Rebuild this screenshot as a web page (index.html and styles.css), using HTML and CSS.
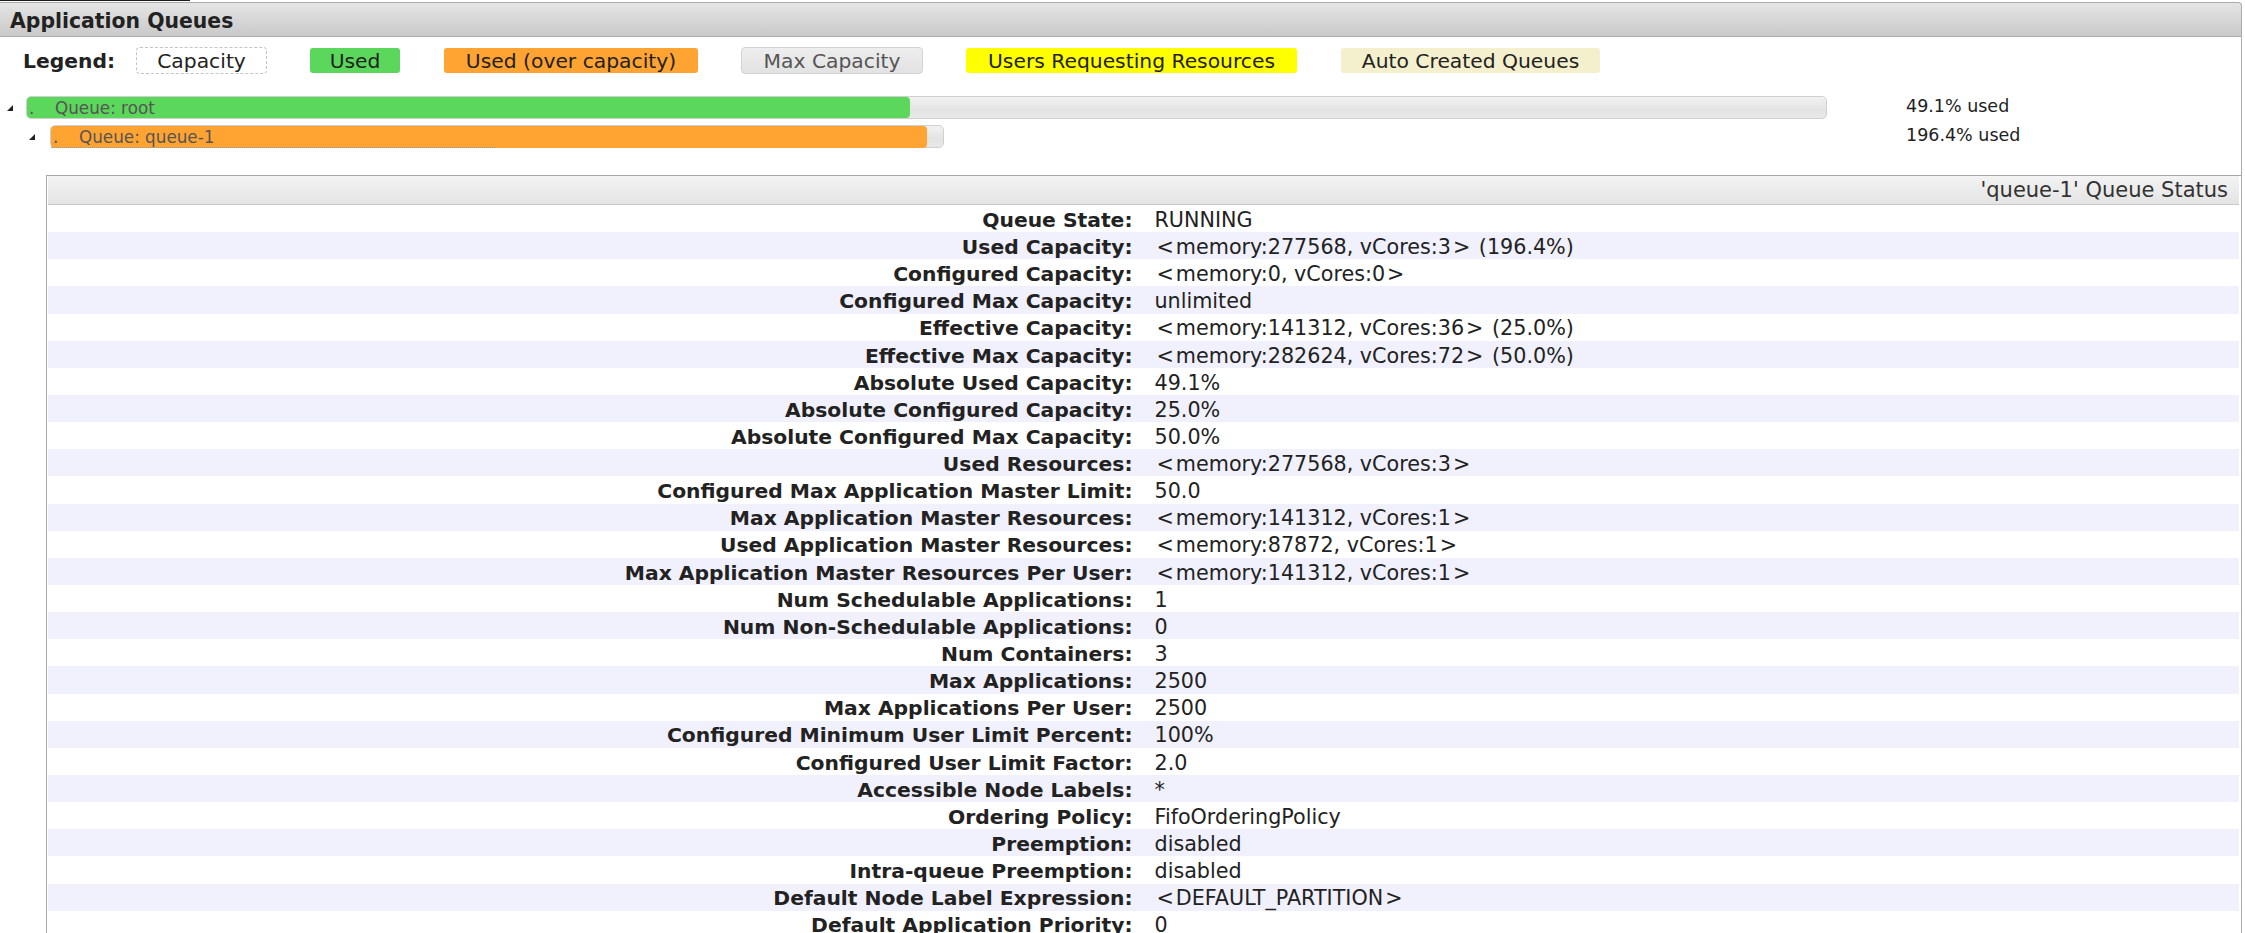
FILE: index.html
```html
<!DOCTYPE html>
<html lang="en">
<head>
<meta charset="utf-8">
<title>Application Queues</title>
<link rel="stylesheet" href="styles.css">
</head>
<body>
<div class="topline"><div class="topline-mark"></div></div>
<div class="app">
  <div class="app-header">Application Queues</div>
  <div class="app-body">
    <div class="legend">
      <span class="legend-title">Legend:</span>
      <div class="legend-items">
        <span class="lg lg-capacity">Capacity</span>
        <span class="lg lg-used">Used</span>
        <span class="lg lg-over">Used (over capacity)</span>
        <span class="lg lg-max">Max Capacity</span>
        <span class="lg lg-users">Users Requesting Resources</span>
        <span class="lg lg-auto">Auto Created Queues</span>
      </div>
    </div>

    <div class="tree">
      <div class="qrow">
        <div class="qnode level-0">
          <svg class="toggle" width="6" height="6" viewBox="0 0 6 6"><path d="M6 0 L6 6 L0 6 Z" fill="#222"/></svg>
          <div class="qbar qbar-root">
            <div class="qfill used" style="width:49.1%"></div>
            <span class="qlabel"><span class="qdot">.</span><span class="qname">Queue: root</span></span>
          </div>
        </div>
        <span class="qstats">49.1% used</span>
      </div>
      <div class="qrow">
        <div class="qnode level-1">
          <svg class="toggle" width="6" height="6" viewBox="0 0 6 6"><path d="M6 0 L6 6 L0 6 Z" fill="#222"/></svg>
          <div class="qbar qbar-child">
            <div class="qfill over" style="width:98.2%"></div>
            <span class="qlabel qlabel-focus"><span class="qdot">.</span><span class="qname">Queue: queue-1</span></span>
          </div>
        </div>
        <span class="qstats">196.4% used</span>
      </div>
    </div>

    <div class="status">
      <div class="status-head">'queue-1' Queue Status</div>
      <div class="rows">
        <div class="srow"><span class="sk">Queue State:</span><span class="sv">RUNNING</span></div>
        <div class="srow"><span class="sk">Used Capacity:</span><span class="sv"><span class="ab">&lt;</span>memory:277568, vCores:3<span class="ab">&gt;</span> (196.4%)</span></div>
        <div class="srow"><span class="sk">Configured Capacity:</span><span class="sv"><span class="ab">&lt;</span>memory:0, vCores:0<span class="ab">&gt;</span></span></div>
        <div class="srow"><span class="sk">Configured Max Capacity:</span><span class="sv">unlimited</span></div>
        <div class="srow"><span class="sk">Effective Capacity:</span><span class="sv"><span class="ab">&lt;</span>memory:141312, vCores:36<span class="ab">&gt;</span> (25.0%)</span></div>
        <div class="srow"><span class="sk">Effective Max Capacity:</span><span class="sv"><span class="ab">&lt;</span>memory:282624, vCores:72<span class="ab">&gt;</span> (50.0%)</span></div>
        <div class="srow"><span class="sk">Absolute Used Capacity:</span><span class="sv">49.1%</span></div>
        <div class="srow"><span class="sk">Absolute Configured Capacity:</span><span class="sv">25.0%</span></div>
        <div class="srow"><span class="sk">Absolute Configured Max Capacity:</span><span class="sv">50.0%</span></div>
        <div class="srow"><span class="sk">Used Resources:</span><span class="sv"><span class="ab">&lt;</span>memory:277568, vCores:3<span class="ab">&gt;</span></span></div>
        <div class="srow"><span class="sk">Configured Max Application Master Limit:</span><span class="sv">50.0</span></div>
        <div class="srow"><span class="sk">Max Application Master Resources:</span><span class="sv"><span class="ab">&lt;</span>memory:141312, vCores:1<span class="ab">&gt;</span></span></div>
        <div class="srow"><span class="sk">Used Application Master Resources:</span><span class="sv"><span class="ab">&lt;</span>memory:87872, vCores:1<span class="ab">&gt;</span></span></div>
        <div class="srow"><span class="sk">Max Application Master Resources Per User:</span><span class="sv"><span class="ab">&lt;</span>memory:141312, vCores:1<span class="ab">&gt;</span></span></div>
        <div class="srow"><span class="sk">Num Schedulable Applications:</span><span class="sv">1</span></div>
        <div class="srow"><span class="sk">Num Non-Schedulable Applications:</span><span class="sv">0</span></div>
        <div class="srow"><span class="sk">Num Containers:</span><span class="sv">3</span></div>
        <div class="srow"><span class="sk">Max Applications:</span><span class="sv">2500</span></div>
        <div class="srow"><span class="sk">Max Applications Per User:</span><span class="sv">2500</span></div>
        <div class="srow"><span class="sk">Configured Minimum User Limit Percent:</span><span class="sv">100%</span></div>
        <div class="srow"><span class="sk">Configured User Limit Factor:</span><span class="sv">2.0</span></div>
        <div class="srow"><span class="sk">Accessible Node Labels:</span><span class="sv">*</span></div>
        <div class="srow"><span class="sk">Ordering Policy:</span><span class="sv">FifoOrderingPolicy</span></div>
        <div class="srow"><span class="sk">Preemption:</span><span class="sv">disabled</span></div>
        <div class="srow"><span class="sk">Intra-queue Preemption:</span><span class="sv">disabled</span></div>
        <div class="srow"><span class="sk">Default Node Label Expression:</span><span class="sv"><span class="ab">&lt;</span>DEFAULT_PARTITION<span class="ab">&gt;</span></span></div>
        <div class="srow"><span class="sk">Default Application Priority:</span><span class="sv">0</span></div>
      </div>
    </div>
  </div>
</div>
</body>
</html>
```

FILE: styles.css
```css
* { box-sizing: border-box; }

html, body {
  margin: 0;
  padding: 0;
  background: #fff;
}

body {
  width: 2245px;
  overflow: hidden;
  font-family: "DejaVu Sans", Verdana, sans-serif;
  color: #222;
}

.topline { height: 2px; }
.topline-mark { width: 190px; height: 1px; background: #1a1a1a; }

.app { width: 2242px; }

.app-header {
  height: 35px;
  border: 1px solid #aaa;
  border-left: none;
  border-top-right-radius: 4px;
  background: linear-gradient(#e4e4e4, #d6d6d6 55%, #c9c9c9);
  padding: 3px 0 0 10px;
  font-weight: bold;
  font-size: 20.4px;
  line-height: 30px;
  color: #222;
  white-space: nowrap;
}

.app-body {
  border-right: 1px solid #aaa;
  padding-top: 10px;
}

/* Legend */
.legend {
  display: flex;
  align-items: center;
  height: 27px;
  padding-left: 23px;
}
.legend-title {
  font-weight: bold;
  font-size: 20.3px;
  line-height: 27px;
  padding-top: 2px;
  margin-right: 21px;
}
.legend-items {
  display: flex;
  align-items: center;
  gap: 42px;
}
.lg {
  height: 27px;
  line-height: 23px;
  padding-top: 2px;
  text-align: center;
  border: 1px solid transparent;
  border-radius: 4px;
  font-size: 20.3px;
  white-space: nowrap;
  background-clip: padding-box;
  color: #222;
}
.lg-capacity { width: 131px; border: 1px dashed #c4c4c4; background: #fff; }
.lg-used { width: 92px; background-color: #5bd75b; }
.lg-over { width: 256px; background-color: #ffa333; }
.lg-max {
  width: 182px;
  border-color: #d3d3d3;
  background: linear-gradient(#eeeeee, #e2e2e2);
  background-clip: border-box;
  color: #555;
}
.lg-users { width: 333px; background-color: #ffff00; }
.lg-auto { width: 261px; background-color: #f4f0cd; }

/* Queue tree */
.tree { margin-top: 19px; }
.qrow {
  display: grid;
  grid-template-columns: 1906px auto;
  align-items: center;
  height: 29px;
}
.qnode { display: flex; align-items: center; }
.qnode.level-0 { padding-left: 7px; }
.qnode.level-1 { padding-left: 29px; }
.toggle { flex: none; display: block; }
.level-0 .toggle { margin-right: 13px; }
.level-1 .toggle { margin-right: 15px; }

.qbar {
  display: grid;
  height: 23px;
  border: 1px solid #d0d0d0;
  border-radius: 5px;
  background: linear-gradient(#f2f2f2, #e3e3e3 60%, #e9e9e9);
}
.qbar-root { width: 1801px; }
.qbar-child { width: 894px; }
.qbar > * { grid-area: 1 / 1; }
.qfill { height: 100%; border-radius: 4px; }
.qfill.used { background: #5bd75b; }
.qfill.over { background: #ffa333; }
.qlabel {
  display: flex;
  font-size: 16.8px;
  line-height: 19px;
  padding-top: 2px;
  padding-left: 2px;
  color: #555;
  white-space: nowrap;
}
.qlabel-focus {
  width: 444px;
  border-bottom: 1px dotted #9a9a9a;
}
.qdot { width: 26px; }
.qstats {
  font-size: 17.5px;
  line-height: 22px;
  padding-bottom: 3px;
  color: #222;
  white-space: nowrap;
}

/* Status table */
.status {
  margin: 24px 0 0 46px;
  border-left: 1px solid #a8a8a8;
  border-top: 1px solid #a8a8a8;
  padding: 0 2px 0 1px;
}
.status-head {
  height: 29px;
  border-bottom: 1px solid #c8c8c8;
  background: linear-gradient(#f3f3f3, #e4e4e4);
  text-align: right;
  padding: 1px 11px 0 0;
  font-size: 21px;
  line-height: 27px;
  color: #333;
  white-space: nowrap;
}
.srow {
  display: grid;
  grid-template-columns: 1fr 1fr;
  padding-top: 3.8px;
  line-height: 23.34px;
  background: #fff;
}
.rows .srow:nth-child(even) { background: #f1f1fd; }
.sk {
  text-align: right;
  font-weight: bold;
  font-size: 20.3px;
  padding-right: 11px;
  white-space: nowrap;
}
.sv {
  font-size: 20.7px;
  padding-left: 11px;
  white-space: nowrap;
}
.ab { margin: 0 2px; }
```
